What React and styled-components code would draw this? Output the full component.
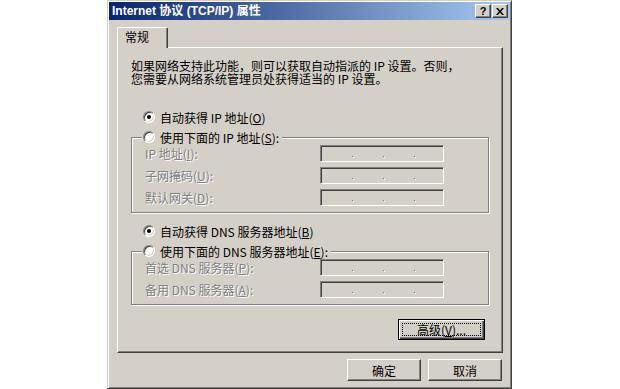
import React from 'react';
import styled, { createGlobalStyle } from 'styled-components';

const GlobalStyle = createGlobalStyle`
  html, body {
    margin: 0;
    padding: 0;
    background: #fff;
  }
  body {
    font-family: "Noto Sans CJK SC", "Liberation Sans", sans-serif;
    font-size: 12px;
    color: #000;
  }
`;

const Page = styled.div`
  box-sizing: border-box;
  width: 620px;
  height: 389px;
  overflow: hidden;
  padding-left: 107px;
`;

const Window = styled.div`
  box-sizing: border-box;
  width: 405px;
  height: 389px;
  padding: 1px;
  background: #d4d0c8;
  border: 1px solid;
  border-color: #d4d0c8 #404040 #404040 #d4d0c8;
  box-shadow: inset 1px 1px #fff, inset -1px -1px #808080;
  display: flex;
  flex-direction: column;
`;

const TitleBar = styled.div`
  height: 18px;
  display: flex;
  align-items: center;
  padding: 0 2px 0 3px;
  background: linear-gradient(to right, #0a246a, #a6caf0);
`;

const Title = styled.div`
  flex: 1;
  color: #fff;
  font: bold 12px "Liberation Sans", "Noto Sans CJK SC", sans-serif;
  line-height: 18px;
  white-space: nowrap;
`;

const CaptionButton = styled.div`
  box-sizing: border-box;
  width: 16px;
  height: 14px;
  margin-left: ${p => p.$gap || 0}px;
  background: #d4d0c8;
  border: 1px solid;
  border-color: #fff #404040 #404040 #fff;
  box-shadow: inset -1px -1px #808080;
  display: flex;
  align-items: center;
  justify-content: center;
  font: bold 11px "Liberation Sans", sans-serif;
  line-height: 12px;
  color: #000;
`;

const Body = styled.div`
  flex: 1;
  display: flex;
  flex-direction: column;
  padding: 7px 7px 0 8px;
`;

const TabStrip = styled.div`
  display: flex;
  height: 20px;
`;

const Tab = styled.div`
  box-sizing: border-box;
  position: relative;
  z-index: 1;
  width: 51px;
  height: 21px;
  margin-bottom: -1px;
  padding-left: 7px;
  background: #d4d0c8;
  border-left: 1px solid #fff;
  border-top: 1px solid #fff;
  border-right: 1px solid #404040;
  border-radius: 2px 2px 0 0;
  box-shadow: inset -1px 0 #808080;
  line-height: 18px;
`;

const Panel = styled.div`
  box-sizing: border-box;
  height: 306px;
  padding: 11px 14px 0 13px;
  border: 1px solid;
  border-color: #fff #404040 #404040 #fff;
  box-shadow: inset -1px -1px #808080;
  display: flex;
  flex-direction: column;
`;

const Intro = styled.p`
  margin: 0;
  line-height: 13px;
  white-space: nowrap;
`;

const RadioLabel = styled.span`
  display: inline-flex;
  align-items: center;
  gap: 5px;
  height: 16px;
  white-space: nowrap;
`;

const RadioRow = styled.div`
  display: flex;
  margin-top: ${p => p.$mt}px;
  padding-left: 12px;
`;

const Radio = styled.span`
  box-sizing: border-box;
  position: relative;
  width: 12px;
  height: 12px;
  flex: none;
  border-radius: 50%;
  border: 1px solid;
  border-color: #808080 #fff #fff #808080;
  box-shadow: inset 1px 1px #404040, inset -1px -1px #d4d0c8;
  background: #fff;

  &::after {
    content: '';
    display: ${p => (p.$checked ? 'block' : 'none')};
    position: absolute;
    left: 3px;
    top: 3px;
    width: 4px;
    height: 4px;
    border-radius: 50%;
    background: #000;
  }
`;

const Group = styled.fieldset`
  box-sizing: border-box;
  width: 358px;
  min-width: 0;
  margin: ${p => p.$mt}px 0 0;
  padding: 0;
  border: 1px solid #808080;
  box-shadow: inset 1px 1px #fff, 1px 1px #fff;
`;

const Legend = styled.legend`
  margin-left: 10px;
  padding: 0 3px 0 1px;
  height: 16px;
  background: #d4d0c8;
`;

const Rows = styled.div`
  display: flex;
  flex-direction: column;
  gap: 5px;
  padding: 0 0 6px 13px;
`;

const Row = styled.div`
  display: flex;
  align-items: center;
  height: 17px;
`;

const FieldLabel = styled.span`
  width: 175px;
  color: #808080;
  text-shadow: 1px 1px 0 #fff;
  white-space: nowrap;
`;

const IpField = styled.div`
  box-sizing: border-box;
  width: 124px;
  height: 17px;
  padding-left: 31px;
  background: #d4d0c8;
  border: 1px solid;
  border-color: #808080 #fff #fff #808080;
  box-shadow: inset 1px 1px #404040, inset -1px -1px #d4d0c8;
  display: flex;
  align-items: center;
  gap: 30px;
`;

const Dot = styled.span`
  width: 1px;
  height: 1px;
  margin-top: 5px;
  background: #808080;
  box-shadow: 1px 1px #fff;
`;

const U = styled.span`
  text-decoration: underline;
  text-underline-offset: 1px;
`;

const Button = styled.div`
  box-sizing: border-box;
  width: ${p => p.$w}px;
  height: ${p => p.$h}px;
  background: #d4d0c8;
  border: 1px solid;
  border-color: #fff #404040 #404040 #fff;
  box-shadow: inset -1px -1px #808080;
  display: flex;
  align-items: center;
  justify-content: center;
  white-space: nowrap;
`;

const FocusButton = styled(Button)`
  align-self: flex-end;
  margin: 14px 3px 0 0;
  padding: 3px;
  border-color: #000;
  box-shadow: inset 1px 1px #fff, inset -1px -1px #404040, inset -2px -2px #808080;
`;

const FocusRing = styled.span`
  flex: 1;
  align-self: stretch;
  display: flex;
  align-items: center;
  justify-content: center;
  border: 1px dotted #000;
`;

const ButtonRow = styled.div`
  display: flex;
  justify-content: flex-end;
  gap: 7px;
  margin-top: 6px;
  padding-right: 1px;
`;

function IpBox() {
  return (
    <IpField>
      <Dot />
      <Dot />
      <Dot />
    </IpField>
  );
}

function Field({ children }) {
  return (
    <Row>
      <FieldLabel>{children}</FieldLabel>
      <IpBox />
    </Row>
  );
}

function RadioItem({ checked, children }) {
  return (
    <RadioLabel>
      <Radio $checked={checked} />
      <span>{children}</span>
    </RadioLabel>
  );
}

export default function App() {
  return (
    <Page>
      <GlobalStyle />
      <Window>
        <TitleBar>
          <Title>Internet 协议 (TCP/IP) 属性</Title>
          <CaptionButton>?</CaptionButton>
          <CaptionButton $gap={1}>
            <svg width="8" height="7" viewBox="0 0 8 7">
              <path d="M0 0h2l2 2.5L6 0h2L5 3.5 8 7H6L4 4.5 2 7H0l3-3.5z" fill="#000" />
            </svg>
          </CaptionButton>
        </TitleBar>
        <Body>
          <TabStrip>
            <Tab>常规</Tab>
          </TabStrip>
          <Panel>
            <Intro>
              如果网络支持此功能，则可以获取自动指派的 IP 设置。否则，
              <br />
              您需要从网络系统管理员处获得适当的 IP 设置。
            </Intro>

            <RadioRow $mt={24}>
              <RadioItem checked>
                自动获得 IP 地址(<U>O</U>)
              </RadioItem>
            </RadioRow>
            <Group $mt={4}>
              <Legend>
                <RadioItem>
                  使用下面的 IP 地址(<U>S</U>):
                </RadioItem>
              </Legend>
              <Rows>
                <Field>IP 地址(<U>I</U>):</Field>
                <Field>子网掩码(<U>U</U>):</Field>
                <Field>默认网关(<U>D</U>):</Field>
              </Rows>
            </Group>

            <RadioRow $mt={10}>
              <RadioItem checked>
                自动获得 DNS 服务器地址(<U>B</U>)
              </RadioItem>
            </RadioRow>
            <Group $mt={4}>
              <Legend>
                <RadioItem>
                  使用下面的 DNS 服务器地址(<U>E</U>):
                </RadioItem>
              </Legend>
              <Rows>
                <Field>首选 DNS 服务器(<U>P</U>):</Field>
                <Field>备用 DNS 服务器(<U>A</U>):</Field>
              </Rows>
            </Group>

            <FocusButton $w={87} $h={21}>
              <FocusRing>
                高级(<U>V</U>)...
              </FocusRing>
            </FocusButton>
          </Panel>
          <ButtonRow>
            <Button $w={74} $h={22}>确定</Button>
            <Button $w={74} $h={22}>取消</Button>
          </ButtonRow>
        </Body>
      </Window>
    </Page>
  );
}
